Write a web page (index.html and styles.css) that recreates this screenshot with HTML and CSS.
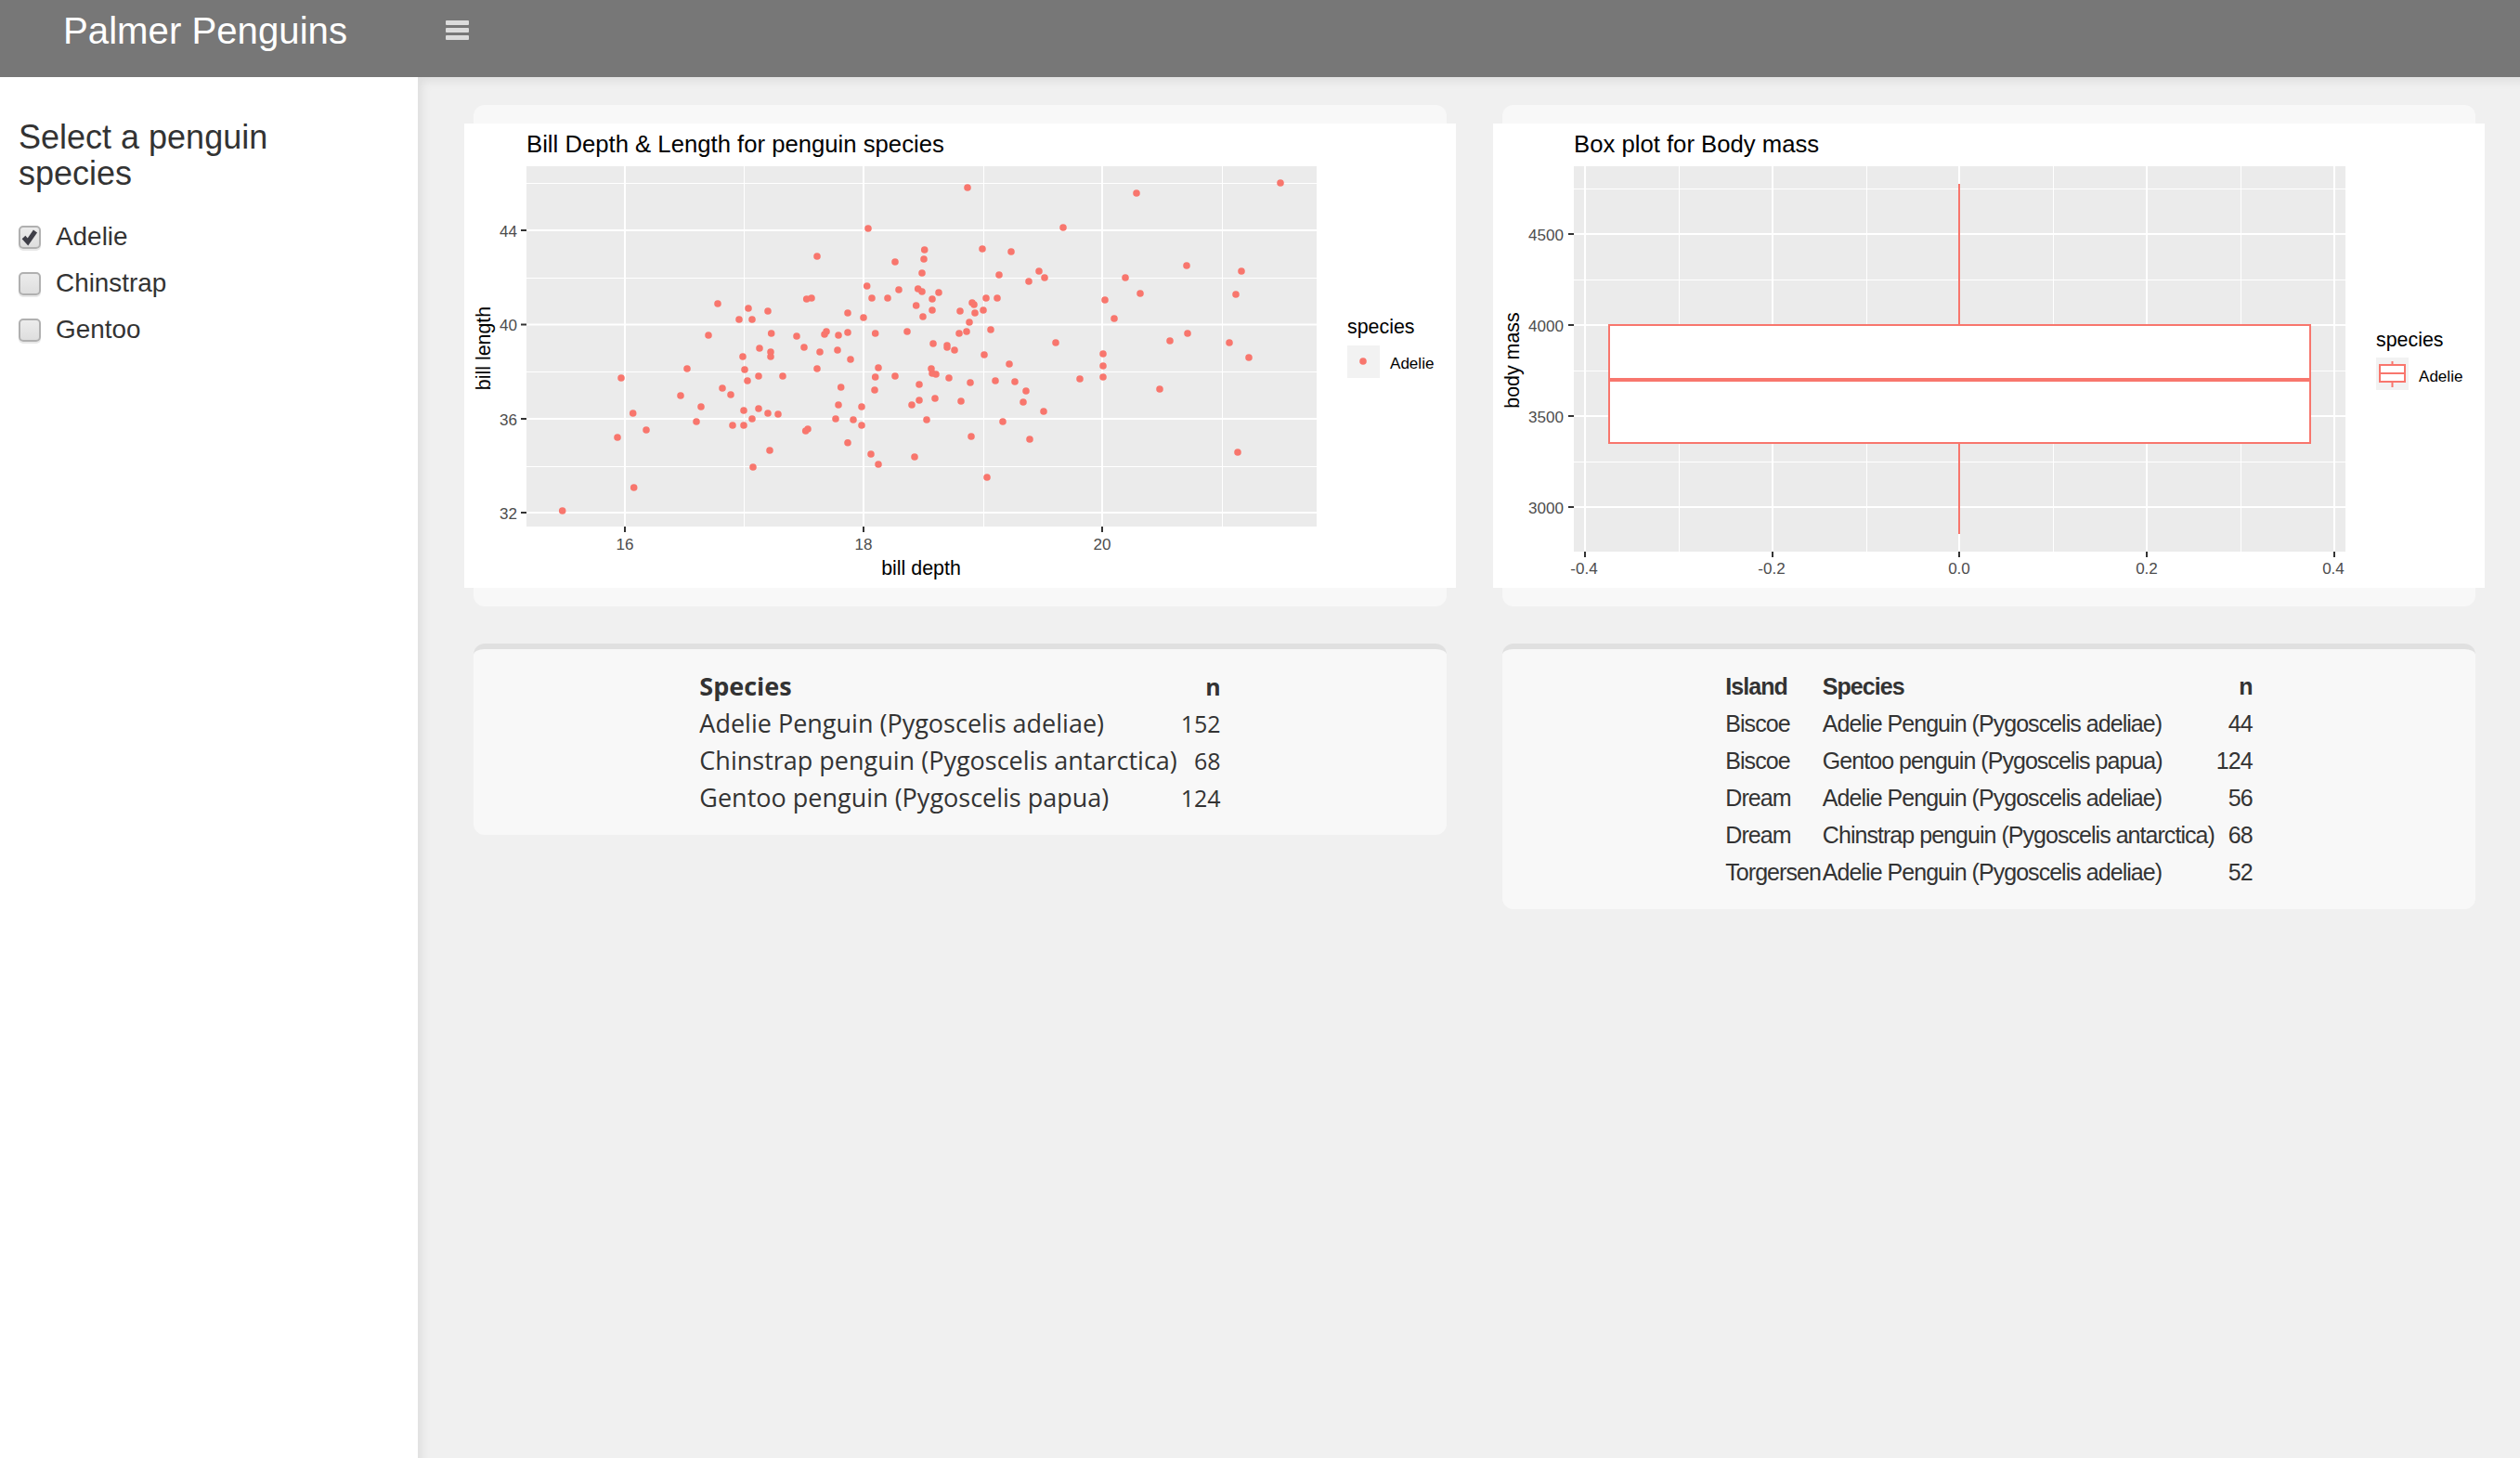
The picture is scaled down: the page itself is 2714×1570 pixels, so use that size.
FILE: index.html
```html
<!DOCTYPE html>
<html lang="en">
<head>
<meta charset="utf-8">
<title>Palmer Penguins</title>
<link rel="stylesheet" href="styles.css">
</head>
<body>
<header class="topbar">
  <div class="brand">Palmer Penguins</div>
  <button class="burger" aria-label="Toggle sidebar"><span></span><span></span><span></span></button>
</header>
<div class="shell">
  <aside class="sidebar">
    <h2 class="side-title">Select a penguin species</h2>
    <label class="check"><span class="box on"><svg viewBox="0 0 23 25" width="23" height="25"><path d="M5.500 12.500 10 17.500 18 6"/></svg></span>Adelie</label>
    <label class="check"><span class="box"></span>Chinstrap</label>
    <label class="check"><span class="box"></span>Gentoo</label>
  </aside>
  <main class="content">
    <section class="card plot-card">
      <svg class="plot" viewBox="500 133 1068 500" width="1068" height="500">
        <rect class="plot-bg" x="500" y="133" width="1068" height="500"/>
        <text class="p-title" x="567" y="164">Bill Depth &amp; Length for penguin species</text>
        <rect class="panel" x="567" y="179" width="851" height="388"/>
        <path class="minor" d="M567 197.5H1418M567 299.5H1418M567 400.5H1418M567 502.5H1418M801.500 179V567M1059.500 179V567M1316.500 179V567"/>
        <path class="major" d="M567 248H1418M567 349.500H1418M567 451H1418M567 552H1418M673 179V567M930 179V567M1187 179V567"/>
        <path class="tick" d="M561 248H567M561 349.500H567M561 451H567M561 552H567M673 567V573M930 567V573M1187 567V573"/>
        <g class="t-tick t-end">
          <text x="557" y="255">44</text><text x="557" y="356">40</text><text x="557" y="458">36</text><text x="557" y="559">32</text>
        </g>
        <g class="t-tick t-mid">
          <text x="673" y="592">16</text><text x="930" y="592">18</text><text x="1187" y="592">20</text>
        </g>
        <text class="t-axis t-mid" x="992" y="619">bill depth</text>
        <text class="t-axis t-mid" transform="translate(528 375) rotate(-90)">bill length</text>
        <path class="dots" d="M935 246h0M880 276h0M964 282h0M933.700 308h0M968 312h0M988.700 311h0M939 321h0M956 321h0M868.700 322h0M874 321h0M773 327h0M806 332h0M827 335h0M913 337h0M986.700 329h0M796 344h0M810 344h0M930 342h0M977 357h0M763 361h0M830.700 359h0M858 362h0M888 360h0M890 357h0M903 361h0M913 358h0M942.700 359h0M866 374h0M818 375h0M902 377h0M830 379h0M883 379h0M800 384h0M830 384h0M916 387h0M740 397h0M880 397h0M946 396h0M802 398h0M817 405h0M843 405h0M964 405h0M942.700 406h0M669 407h0M805 410h0M990 414h0M905.700 417h0M778 418h0M942 420h0M733 426h0M787 425h0M990 431h0M982 436h0M903 436h0M755 438h0M928 438h0M817 440h0M801 442h0M681.700 445h0M827 445h0M838 446h0M810 451h0M900 451h0M919 452h0M750 454h0M789 458h0M801 458h0M928 458h0M870 462h0M867.700 464h0M696 463h0M665 471h0M913 476.700h0M829 485h0M938 489h0M985 492h0M946 500h0M811 503h0M682.700 525h0M605.700 550h0M1042 202h0M1224 208h0M1379 197h0M1145 245h0M995.700 269h0M1058 268h0M1089 271h0M995 279h0M1278 286h0M1337 292h0M1119 292h0M1076 296h0M993 294h0M1125 299h0M1212 299h0M1108 303h0M993 314h0M1011 315h0M1228 316h0M1331 317h0M1004 322h0M1062 321h0M1074 321h0M1190 323h0M1047 326h0M1049 328h0M1004 334h0M1034 335h0M1059 334h0M1050 337h0M994 341h0M1200 343h0M1044 347h0M1041 357h0M1033 359h0M1067 355h0M1279 359h0M1260 367h0M1324 369h0M1005 370h0M1137 369h0M1020 372h0M1020 374h0M1028 377h0M1060 382h0M1188 381h0M1345 385h0M1087 392h0M1188 394h0M1003 397h0M1004 402h0M1008 403h0M1022 407h0M1045 412h0M1072 410h0M1093 411h0M1163 408h0M1188 406h0M1105 421h0M1249 419h0M1007 429h0M1035 432h0M1102 433h0M1124 443h0M998 452h0M1080 454h0M1046 470h0M1109 473h0M1333 487h0M1063 514h0"/>
        <text class="t-axis" x="1451" y="359">species</text>
        <rect class="key" x="1451" y="372" width="35" height="35"/>
        <path class="dots" d="M1468 389h0"/>
        <text class="t-tick t-black" x="1497" y="397">Adelie</text>
      </svg>
    </section>
    <section class="card plot-card">
      <svg class="plot" viewBox="1608 133 1068 500" width="1068" height="500">
        <rect class="plot-bg" x="1608" y="133" width="1068" height="500"/>
        <text class="p-title" x="1695" y="164">Box plot for Body mass</text>
        <rect class="panel" x="1695" y="179" width="831" height="415"/>
        <path class="minor" d="M1695 203.500H2526M1695 301.500H2526M1695 399.500H2526M1695 497.500H2526M1808.500 179V594M2010.500 179V594M2211.500 179V594M2413.500 179V594"/>
        <path class="major" d="M1695 252H2526M1695 350H2526M1695 448H2526M1695 546H2526M1707 179V594M1909 179V594M2110 179V594M2312 179V594M2514 179V594"/>
        <path class="tick" d="M1689 252H1695M1689 350H1695M1689 448H1695M1689 546H1695M1707 594V600M1909 594V600M2110 594V600M2312 594V600M2514 594V600"/>
        <g class="t-tick t-end">
          <text x="1684" y="259">4500</text><text x="1684" y="357">4000</text><text x="1684" y="455">3500</text><text x="1684" y="553">3000</text>
        </g>
        <g class="t-tick t-mid">
          <text x="1706" y="618">-0.4</text><text x="1908" y="618">-0.2</text><text x="2110" y="618">0.0</text><text x="2312" y="618">0.2</text><text x="2513" y="618">0.4</text>
        </g>
        <text class="t-axis t-mid" transform="translate(1636 388) rotate(-90)">body mass</text>
        <path class="whisker" d="M2110 198V350M2110 477V575"/>
        <rect class="boxrect" x="1733" y="350" width="755" height="127"/>
        <path class="median" d="M1733 409H2488"/>
        <text class="t-axis" x="2559" y="373">species</text>
        <rect class="key" x="2559" y="385" width="35" height="35"/>
        <path class="whisker" d="M2576.500 389V393M2576.500 411V417"/>
        <rect class="boxrect" x="2563" y="393" width="27" height="18"/>
        <path class="whisker" d="M2563 402H2590"/>
        <text class="t-tick t-black" x="2605" y="411">Adelie</text>
      </svg>
    </section>
    <section class="card table-card">
      <table class="tbl tbl-open">
        <thead><tr><th>Species</th><th class="num">n</th></tr></thead>
        <tbody>
          <tr><td>Adelie Penguin (Pygoscelis adeliae)</td><td class="num">152</td></tr>
          <tr><td>Chinstrap penguin (Pygoscelis antarctica)</td><td class="num">68</td></tr>
          <tr><td>Gentoo penguin (Pygoscelis papua)</td><td class="num">124</td></tr>
        </tbody>
      </table>
    </section>
    <section class="card table-card">
      <table class="tbl tbl-arial">
        <thead><tr><th>Island</th><th>Species</th><th class="num">n</th></tr></thead>
        <tbody>
          <tr><td>Biscoe</td><td>Adelie Penguin (Pygoscelis adeliae)</td><td class="num">44</td></tr>
          <tr><td>Biscoe</td><td>Gentoo penguin (Pygoscelis papua)</td><td class="num">124</td></tr>
          <tr><td>Dream</td><td>Adelie Penguin (Pygoscelis adeliae)</td><td class="num">56</td></tr>
          <tr><td>Dream</td><td>Chinstrap penguin (Pygoscelis antarctica)</td><td class="num">68</td></tr>
          <tr><td>Torgersen</td><td>Adelie Penguin (Pygoscelis adeliae)</td><td class="num">52</td></tr>
        </tbody>
      </table>
    </section>
  </main>
</div>
</body>
</html>
```
FILE: styles.css
```css
* { box-sizing: border-box; }
html, body { margin: 0; height: 100%; }
body {
  display: flex;
  flex-direction: column;
  overflow: hidden;
  background: #f0f0f0;
  color: #333;
  font-family: "Liberation Sans", Arial, sans-serif;
}
.topbar {
  flex: none;
  height: 83px;
  background: #777;
  display: flex;
  align-items: flex-start;
}
.brand {
  width: 450px;
  padding: 10px 0 0 68px;
  color: #fff;
  font-size: 40.2px;
  line-height: 47px;
  white-space: nowrap;
}
.burger {
  margin: 22px 0 0 30px;
  padding: 0;
  width: 25px;
  height: 21px;
  border: 0;
  background: none;
  display: flex;
  flex-direction: column;
  justify-content: space-between;
}
.burger span {
  display: block;
  height: 5px;
  border-radius: 1px;
  background: #dcdcdc;
}
.shell { flex: 1; display: flex; min-height: 0; }
.sidebar {
  flex: none;
  width: 450px;
  background: #fff;
  padding: 45px 20px 0;
}
.side-title {
  margin: 0 0 24px;
  font-size: 36px;
  font-weight: 400;
  line-height: 39px;
  width: 300px;
}
.check {
  display: flex;
  align-items: center;
  gap: 16px;
  height: 50px;
  font-size: 27.9px;
  color: #333;
}
.box {
  flex: none;
  width: 24px;
  height: 25px;
  border: 2px solid #b0b0b0;
  border-radius: 5px;
  background: linear-gradient(#ececec, #dedede);
  box-shadow: 0 2px 0 #e8e8e8;
  position: relative;
}
.box svg {
  position: absolute;
  left: -2px;
  top: -2px;
  fill: none;
  stroke: #3f3f48;
  stroke-width: 5;
}
.content {
  flex: 1;
  min-width: 0;
  padding: 30px 48px 0 60px;
  display: grid;
  grid-template-columns: 1048px 1048px;
  grid-auto-rows: min-content;
  column-gap: 60px;
  row-gap: 40px;
  align-items: start;
  box-shadow: inset 11px 11px 11px -7px rgba(0, 0, 0, .08);
}
.card { background: #f8f8f8; border-radius: 12px; }
.plot-card { height: 540px; padding-top: 20px; }
.plot { display: block; margin-left: -10px; }
.table-card {
  border-top: 6px solid #e0e0e0;
  padding: 20px 0;
  display: flex;
  justify-content: center;
}
.tbl { border-collapse: collapse; line-height: 40px; color: #333; white-space: nowrap; }
.tbl th, .tbl td { padding: 0; text-align: left; }
.tbl .num { text-align: right; }
.tbl-open { font-family: "Open Sans", sans-serif; font-size: 27px; letter-spacing: 0; }
.tbl-open .num { padding-left: 4px; font-size: 25px; }
.tbl-arial { font-size: 25px; letter-spacing: -.96px; }
.tbl-arial .num { padding-left: 2px; }
.tbl-arial th:first-child, .tbl-arial td:first-child { padding-right: 2px; }

.plot-bg { fill: #fff; }
.panel { fill: #ebebeb; }
.minor { stroke: #fff; stroke-width: 1; fill: none; }
.major { stroke: #fff; stroke-width: 2; fill: none; }
.tick { stroke: #333; stroke-width: 2; fill: none; }
.p-title { font-size: 25.7px; fill: #000; }
.t-tick { font-size: 17.07px; fill: #4d4d4d; }
.t-black { fill: #000; }
.t-axis { font-size: 21.4px; fill: #000; }
.t-end { text-anchor: end; }
.t-mid { text-anchor: middle; }
.dots { stroke: #f8766d; stroke-width: 7.6; stroke-linecap: round; fill: none; }
.key { fill: #f2f2f2; }
.whisker { stroke: #f8766d; stroke-width: 2; fill: none; }
.boxrect { fill: #fff; stroke: #f8766d; stroke-width: 2; }
.median { stroke: #f8766d; stroke-width: 4; fill: none; }
```
